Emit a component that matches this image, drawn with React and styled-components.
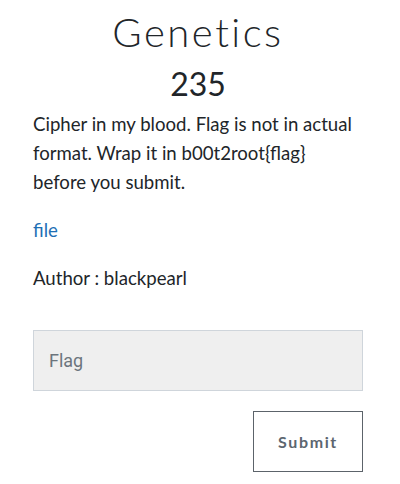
import React, { useState } from "react";
import styled, { createGlobalStyle } from "styled-components";

const GlobalStyle = createGlobalStyle`
  html, body {
    margin: 0;
    padding: 0;
    background: #ffffff;
  }
  body {
    font-family: Lato, "Liberation Sans", sans-serif;
    color: #212529;
  }
  * {
    box-sizing: border-box;
  }
`;

const Modal = styled.div`
  width: 400px;
  padding: 10px 37px 12px 33px;
`;

const Title = styled.h2`
  margin: 0;
  text-align: center;
  font-family: Lato, sans-serif;
  font-weight: 300;
  font-size: 40px;
  letter-spacing: 2.5px;
  line-height: 44px;
  color: #212529;
`;

const Value = styled.h3`
  margin: 12px 0 0;
  text-align: center;
  font-family: Lato, sans-serif;
  font-weight: 400;
  font-size: 32px;
  line-height: 36px;
  color: #212529;
`;

const Description = styled.div`
  margin-top: 8px;
  font-size: 18.6px;
  line-height: 29px;

  p {
    margin: 0 0 19px;
  }
`;

const FileLink = styled.a`
  color: #1e6fb5;
  text-decoration: none;
`;

const Form = styled.form`
  margin-top: 37px;
  display: flex;
  flex-direction: column;
  align-items: flex-end;
  gap: 20px;
`;

const FlagInput = styled.input`
  width: 100%;
  height: 61px;
  padding: 0 15px;
  background: #efefef;
  border: 1px solid #cfd5db;
  border-radius: 0;
  font-family: Roboto, sans-serif;
  font-size: 18px;
  color: #495057;
  outline: none;

  &::placeholder {
    color: #6c757d;
  }
`;

const SubmitButton = styled.button`
  width: 110px;
  height: 61px;
  background: #ffffff;
  border: 1px solid #5c636a;
  border-radius: 0;
  font-family: Lato, sans-serif;
  font-weight: 700;
  font-size: 16px;
  letter-spacing: 1.6px;
  color: #5c666f;
  cursor: pointer;
`;

export default function App() {
  const [flag, setFlag] = useState("");

  return (
    <>
      <GlobalStyle />
      <Modal>
        <Title>Genetics</Title>
        <Value>235</Value>
        <Description>
          <p>
            Cipher in my blood. Flag is not in actual format. Wrap it in
            b00t2root{"{flag}"} before you submit.
          </p>
          <p>
            <FileLink href="#">file</FileLink>
          </p>
          <p>Author : blackpearl</p>
        </Description>
        <Form onSubmit={(e) => e.preventDefault()}>
          <FlagInput
            placeholder="Flag"
            value={flag}
            onChange={(e) => setFlag(e.target.value)}
          />
          <SubmitButton type="submit">Submit</SubmitButton>
        </Form>
      </Modal>
    </>
  );
}
